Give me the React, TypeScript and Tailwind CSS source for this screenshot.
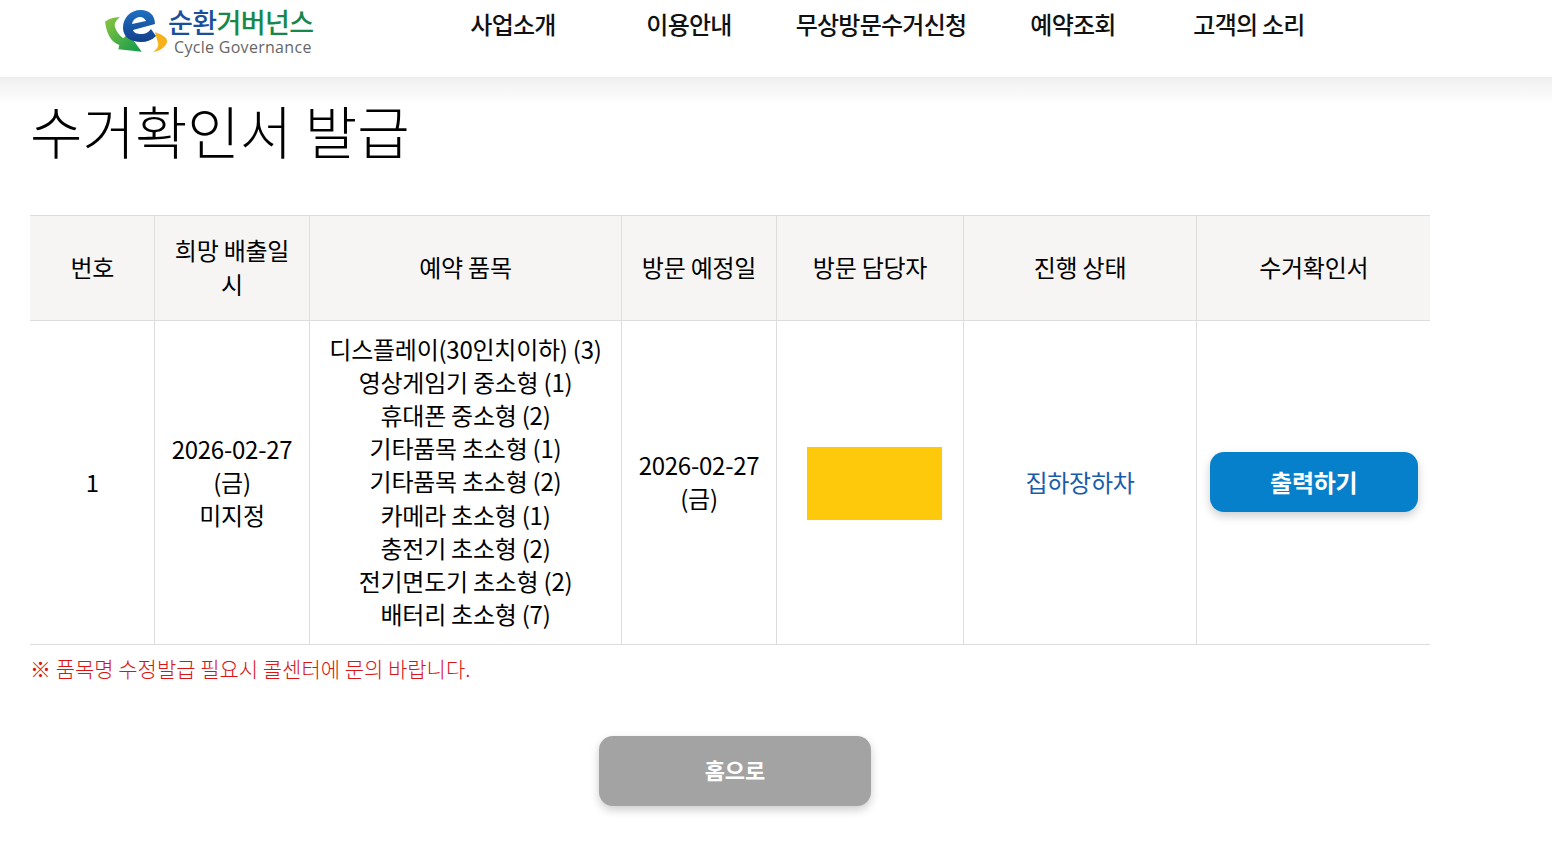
import React from 'react';

const navItems = [
  { label: '사업소개', cls: 'w-[176px]' },
  { label: '이용안내', cls: 'w-[176px]' },
  { label: '무상방문수거신청', cls: 'w-[208px]' },
  { label: '예약조회', cls: 'w-[176px]' },
  { label: '고객의 소리', cls: 'w-[176px]' },
];

const items = [
  '디스플레이(30인치이하) (3)',
  '영상게임기 중소형 (1)',
  '휴대폰 중소형 (2)',
  '기타품목 초소형 (1)',
  '기타품목 초소형 (2)',
  '카메라 초소형 (1)',
  '충전기 초소형 (2)',
  '전기면도기 초소형 (2)',
  '배터리 초소형 (7)',
];

const headers = [
  { label: '번호', cls: 'w-[124px] pl-[1px]' },
  { label: '희망 배출일시', cls: 'w-[155px] pl-[13px] pr-3' },
  { label: '예약 품목', cls: 'w-[312px] pl-[1px]' },
  { label: '방문 예정일', cls: 'w-[155px] pl-[1px]' },
  { label: '방문 담당자', cls: 'w-[187px] pl-[1px]' },
  { label: '진행 상태', cls: 'w-[233px] pl-[1px]' },
  { label: '수거확인서', cls: 'w-[234px] pl-[1px]' },
];

function Logo() {
  return (
    <div className="flex items-start">
      <svg width="68" height="60" viewBox="0 0 68 60" className="shrink-0">
        <defs>
          <linearGradient id="swoosh" x1="0" y1="0" x2="1" y2="1">
            <stop offset="0" stopColor="#8cc63f" />
            <stop offset="1" stopColor="#0f9a4c" />
          </linearGradient>
          <linearGradient id="letter" x1="0" y1="0" x2="0" y2="1">
            <stop offset="0" stopColor="#1f6fc0" />
            <stop offset="1" stopColor="#143f8c" />
          </linearGradient>
        </defs>
        <path d="M5 21.7 C 10 18 15 17 20 17.3 C 16 20 14 24 15 27 C 16 31 19 35 23.3 38.3 L 28.3 33.3 L 41.7 51.7 L 18.3 49.3 L 19.3 45 C 12 42 7 36 5 21.7 Z" fill="url(#swoosh)" />
        <path d="M55 32 C 63 35 68 38 67 42 C 66 47 60 51 53 52 C 57 49 59 46 58 43 C 57 39 56 36 55 32 Z" fill="#f7b21b" />
        <path
          fillRule="evenodd"
          d="M41 10 C 30 10 23 18 23 28 C 23 37 31 42 41 42 C 47 42 52 40 56 36 L 51 29 C 48 33 45 34 41 34 C 37 34 34 33 33 30 L 55 24 C 55 15 49 10 41 10 Z M32 24 C 33 19 37 17 40 17 C 43 17 45 19 46 21 Z"
          fill="url(#letter)"
        />
      </svg>
      <div className="flex flex-col pt-[6px]">
        <span className="text-[27px] leading-[32px] font-medium tracking-[-0.6px] text-[#1a4f9c]">
          순환<span className="text-[#17874a]">거버넌스</span>
        </span>
        <span className="ml-[6px] text-[16px] leading-[18px] tracking-[0.3px] text-[#666666] font-['Open_Sans',sans-serif]">
          Cycle Governance
        </span>
      </div>
    </div>
  );
}

export default function App() {
  return (
    <div className="min-h-[849px] bg-white text-black font-['Noto_Sans_CJK_KR','Noto_Sans',sans-serif]">
      <header className="relative z-10 flex h-[77px] items-start bg-white">
        <div className="ml-[100px] w-[325px]">
          <Logo />
        </div>
        <nav className="flex pt-[7px]">
          {navItems.map((item) => (
            <a key={item.label} className={`${item.cls} text-center text-[24px] leading-[34px] font-medium tracking-[-0.75px] text-[#111111]`}>
              {item.label}
            </a>
          ))}
        </nav>
      </header>

      <main className="bg-gradient-to-b from-[#efefef] to-white to-[28px] px-[30px]">
        <h1 className="pt-[12px] pb-[2px] text-[57px] leading-[80px] font-light">수거확인서 발급</h1>

        <table className="mt-[44px] w-[1400px] table-fixed border-collapse text-[24px] tracking-[-0.25px]">
          <thead>
            <tr className="h-[105px] border-y border-[#dddddd] bg-[#f6f5f3] text-center">
              {headers.map((h, i) => (
                <th key={h.label} className={`${h.cls} ${i > 0 ? 'border-l border-[#dddddd]' : ''} pb-[2px] leading-[34px] font-normal`}>
                  {h.label}
                </th>
              ))}
            </tr>
          </thead>
          <tbody>
            <tr className="h-[324px] border-b border-[#dddddd] text-center leading-[33.1px]">
              <td className="pb-[2px] pl-[1px]">1</td>
              <td className="border-l border-[#dddddd] pb-[2px] pl-[9px] pr-2">
                2026-02-27
                <br />
                (금)
                <br />
                미지정
              </td>
              <td className="border-l border-[#dddddd] pb-[3px] pl-[1px]">
                {items.map((item) => (
                  <div key={item}>{item}</div>
                ))}
              </td>
              <td className="border-l border-[#dddddd] pb-[3px] pl-[9px] pr-2">
                2026-02-27
                <br />
                (금)
              </td>
              <td className="border-l border-[#dddddd]">
                <div className="ml-[30px] mt-[2px] h-[73px] w-[135px] bg-[#ffc90b]" />
              </td>
              <td className="border-l border-[#dddddd] pb-[2px] pl-[1px] text-[#1a5ca8]">집하장하차</td>
              <td className="border-l border-[#dddddd] pb-[2px] pl-[1px]">
                <button className="mx-auto block h-[60px] w-[208px] rounded-[14px] bg-[#0780cb] text-[24px] font-bold text-white shadow-[0_4px_10px_rgba(0,0,0,0.2)]">
                  출력하기
                </button>
              </td>
            </tr>
          </tbody>
        </table>

        <p className="mt-[7px] text-[21px] leading-[32px] font-light text-[#d81414]">※ 품목명 수정발급 필요시 콜센터에 문의 바랍니다.</p>

        <div className="mt-[52px] flex w-[1410px] justify-center">
          <button className="h-[70px] w-[272px] rounded-[14px] bg-[#a3a3a3] pb-[3px] text-[22px] font-bold text-white shadow-[0_4px_10px_rgba(0,0,0,0.2)]">
            홈으로
          </button>
        </div>
      </main>
    </div>
  );
}
